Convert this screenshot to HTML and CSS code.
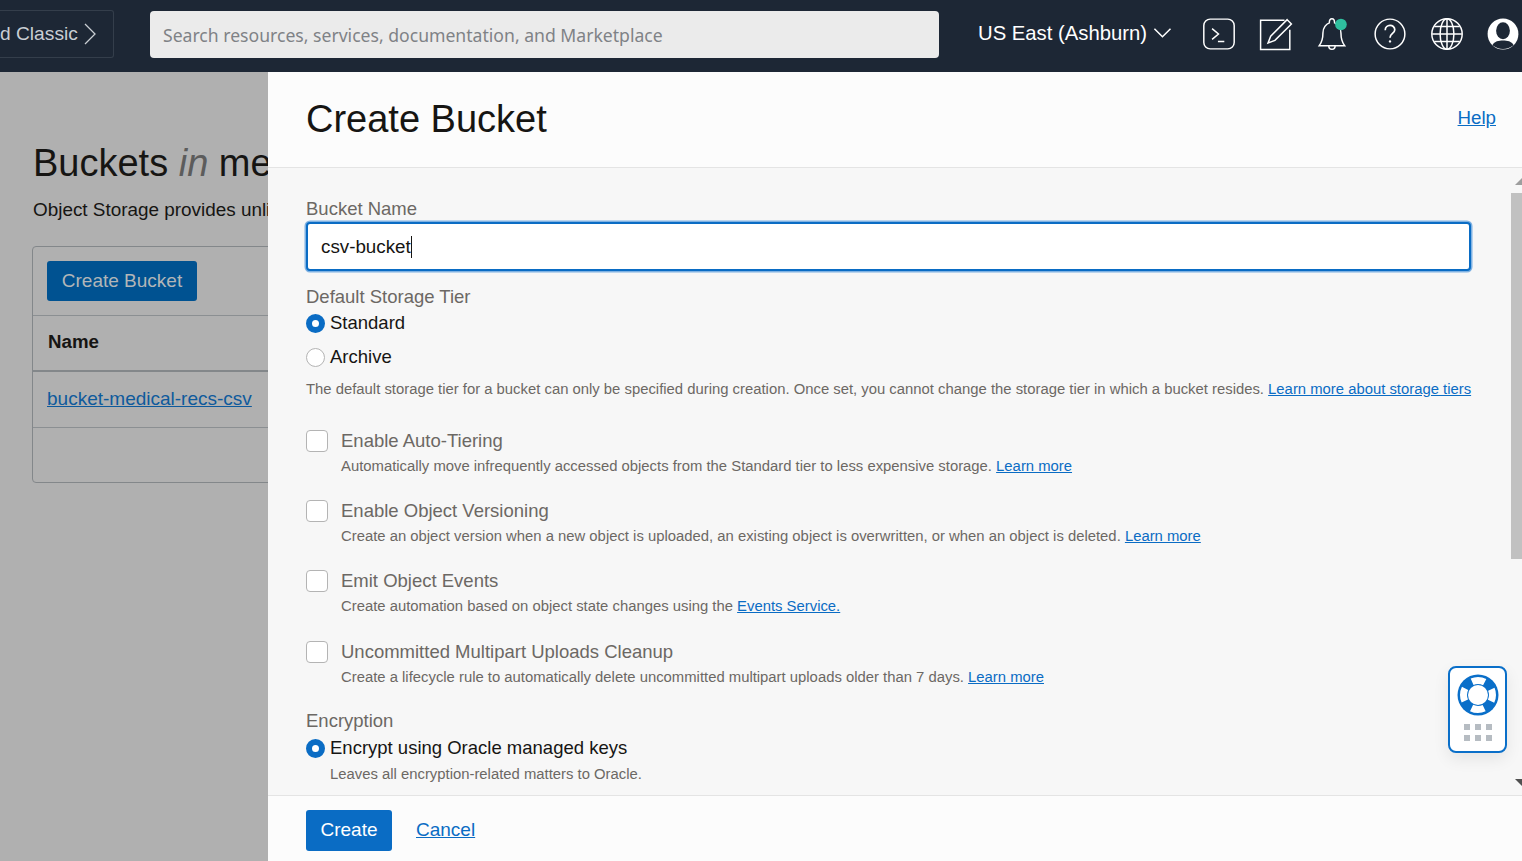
FILE: index.html
```html
<!DOCTYPE html>
<html lang="en">
<head>
    <meta charset="UTF-8">
    <meta name="viewport" content="width=device-width, initial-scale=1.0">
    <title>Create Bucket</title>
    <link rel="stylesheet" href="styles.css">
</head>
<body>
    <header class="topbar">
        <div class="classic">
            <span>d Classic</span>
            <svg width="12" height="22" viewBox="0 0 12 22" fill="none" stroke="#c9ced3" stroke-width="1.3"><path d="M1 1l10 10L1 21"/></svg>
        </div>
        <div class="search">Search resources, services, documentation, and Marketplace</div>
        <div class="region">
            <span>US East (Ashburn)</span>
            <svg width="20" height="12" viewBox="0 0 20 12" fill="none" stroke="#fff" stroke-width="1.6"><path d="M1.5 1.5l8.5 8.5 8.5-8.5"/></svg>
        </div>
        <div class="tools">
            <svg class="tool" width="34" height="34" viewBox="0 0 32 32" fill="none" stroke="#fff" stroke-width="1.4"><rect x="1.700" y="2" width="28.600" height="28" rx="6"/><path d="M9.500 11l6 5-6 5M15 23h6"/></svg>
            <svg class="tool" width="34" height="34" viewBox="0 0 32 32" fill="none" stroke="#fff" stroke-width="1.4"><path d="M24 3H1.500v27.500h27.500V12"/><path d="M26.500 2.500l4 4L15 22l-6.500 2.500L11 18z"/></svg>
            <svg class="tool" width="34" height="36" viewBox="0 0 32 34" fill="none" stroke="#fff" stroke-width="1.4"><path d="M3 28c3-4 3.500-7 3.500-12 0-5 3-8.500 6-9.500 0-3 1-4 2.500-4s2.500 1 2.500 4c3 1 6 4.500 6 9.500 0 5 .5 8 3.500 12z"/><path d="M12 28c0 4.500 6 4.500 6 0"/><circle cx="23.500" cy="8" r="5.500" fill="#2fbf9f" stroke="none"/></svg>
            <svg class="tool" width="34" height="34" viewBox="0 0 32 32" fill="none" stroke="#fff" stroke-width="1.4"><circle cx="16" cy="16" r="14"/><path d="M11.500 12.500c0-6 9-6 9-.5 0 3.500-4.500 3.500-4.500 7.500" stroke-width="1.6"/><circle cx="16" cy="23" r="1.100" fill="#fff" stroke="none"/></svg>
            <svg class="tool" width="34" height="34" viewBox="0 0 32 32" fill="none" stroke="#fff" stroke-width="1.4"><circle cx="16" cy="16" r="14.300"/><ellipse cx="16" cy="16" rx="6.500" ry="14.300"/><path d="M16 1.700v28.600M2 16h28M4 9h24M4 23h24"/></svg>
            <svg class="tool" width="32" height="34" viewBox="0 0 30 32"><circle cx="15" cy="16" r="14.500" fill="#fff"/><ellipse cx="15" cy="13" rx="6.500" ry="8" fill="#1d2735"/><path d="M5 26.500c2-4 6-4.500 10-4.500s8 .5 10 4.500c-3 2.300-6.500 3.500-10 3.500s-7-1.200-10-3.500z" fill="#1d2735"/></svg>
        </div>
    </header>

    <main class="page">
        <h1 class="page-title">Buckets <em>in</em> medical-recs</h1>
        <p class="page-desc">Object Storage provides unlimited, high-performance storage</p>
        <div class="panel">
            <div class="panel-top"><span class="btn-dim">Create Bucket</span></div>
            <div class="panel-head">Name</div>
            <div class="panel-row"><a href="#">bucket-medical-recs-csv</a></div>
        </div>
    </main>

    <div class="drawer">
        <div class="drawer-head">
            <h2>Create Bucket</h2>
            <a href="#" class="help">Help</a>
        </div>

        <div class="drawer-body">
            <form class="form">
                <div class="label">Bucket Name</div>
                <div class="name-input"><span>csv-bucket</span><i class="caret"></i></div>

                <div class="label label-tier">Default Storage Tier</div>
                <div class="radio-row"><span class="radio on"></span>Standard</div>
                <div class="radio-row second"><span class="radio"></span>Archive</div>
                <p class="hint tier-hint">The default storage tier for a bucket can only be specified during creation. Once set, you cannot change the storage tier in which a bucket resides. <a href="#">Learn more about storage tiers</a></p>

                <div class="check">
                    <span class="box"></span>
                    <div>
                        <div class="check-title">Enable Auto-Tiering</div>
                        <p class="hint">Automatically move infrequently accessed objects from the Standard tier to less expensive storage. <a href="#">Learn more</a></p>
                    </div>
                </div>
                <div class="check">
                    <span class="box"></span>
                    <div>
                        <div class="check-title">Enable Object Versioning</div>
                        <p class="hint">Create an object version when a new object is uploaded, an existing object is overwritten, or when an object is deleted. <a href="#">Learn more</a></p>
                    </div>
                </div>
                <div class="check">
                    <span class="box"></span>
                    <div>
                        <div class="check-title">Emit Object Events</div>
                        <p class="hint">Create automation based on object state changes using the <a href="#">Events Service.</a></p>
                    </div>
                </div>
                <div class="check check-last">
                    <span class="box"></span>
                    <div>
                        <div class="check-title">Uncommitted Multipart Uploads Cleanup</div>
                        <p class="hint">Create a lifecycle rule to automatically delete uncommitted multipart uploads older than 7 days. <a href="#">Learn more</a></p>
                    </div>
                </div>

                <div class="label label-enc">Encryption</div>
                <div class="radio-row"><span class="radio on"></span>Encrypt using Oracle managed keys</div>
                <p class="hint enc-hint">Leaves all encryption-related matters to Oracle.</p>
            </form>

            <div class="scrollbar">
                <span class="arrow up"></span>
                <span class="thumb"></span>
                <span class="arrow down"></span>
            </div>
        </div>

        <div class="drawer-foot">
            <button type="button" class="create">Create</button>
            <a href="#" class="cancel">Cancel</a>
        </div>

        <div class="help-widget">
            <svg width="42" height="42" viewBox="0 0 42 42">
                <circle cx="21" cy="21" r="20.500" fill="#0a6fc9"/>
                <circle cx="21" cy="21" r="14.500" fill="none" stroke="#fff" stroke-width="7" stroke-dasharray="13 9.780" stroke-dashoffset="6.500"/>
                <circle cx="21" cy="21" r="10" fill="#fff"/>
            </svg>
            <div class="dots"><i></i><i></i><i></i><i></i><i></i><i></i></div>
        </div>
    </div>
</body>
</html>
```
FILE: styles.css
```css
* {
    box-sizing: border-box;
}
html, body {
    height: 100%;
}
body {
    margin: 0;
    position: relative;
    overflow: hidden;
    background-color: #b0b0b0;
    font-family: "Liberation Sans", Arial, sans-serif;
    color: #161513;
}
a {
    color: #0a6cc4;
}

/* top bar */
.topbar {
    height: 72px;
    background-color: #1d2735;
    display: flex;
    align-items: center;
}
.classic {
    width: 114px;
    height: 48px;
    margin-top: -4px;
    border: 1px solid #343e4b;
    border-left: none;
    border-radius: 0 3px 3px 0;
    display: flex;
    align-items: center;
    gap: 6px;
    color: #c9ced3;
    font-size: 19.2px;
}
.search {
    width: 789px;
    height: 47px;
    margin-left: 36px;
    margin-top: -3px;
    padding-left: 13px;
    border-radius: 4px;
    background-color: #ebebeb;
    color: #7f8286;
    font-family: "Noto Sans", sans-serif;
    font-size: 17.6px;
    line-height: 49px;
    white-space: nowrap;
}
.region {
    width: 194px;
    margin-left: 39px;
    margin-top: -6px;
    display: flex;
    align-items: center;
    gap: 6px;
    color: #fff;
    font-size: 20.3px;
    white-space: nowrap;
}
.tools {
    margin-left: 30px;
    margin-top: -4px;
    display: flex;
    align-items: center;
    gap: 23px;
    flex: none;
}
.tool {
    flex: none;
}

/* dimmed page behind the drawer, cut off where the drawer starts */
.page {
    width: 268px;
    height: 789px;
    overflow: hidden;
    padding: 68px 0 0 33px;
    white-space: nowrap;
}
.page-title {
    margin: 0;
    font-size: 38px;
    font-weight: normal;
    line-height: 46px;
}
.page-title em {
    color: #5c5c5c;
}
.page-desc {
    margin: 12px 0 0;
    font-size: 18.9px;
    line-height: 24px;
}
.panel {
    width: 500px;
    height: 237px;
    margin: 24px 0 0 -1px;
    border: 1px solid #83878a;
    border-radius: 4px;
}
.panel-top {
    height: 69px;
    padding: 14px 14px 0;
    border-bottom: 1px solid #8b8f92;
}
.btn-dim {
    display: inline-block;
    width: 150px;
    height: 40px;
    border-radius: 3px;
    background-color: #005291;
    color: #b2b6b8;
    font-size: 19px;
    line-height: 40px;
    text-align: center;
}
.panel-head {
    height: 56px;
    padding-left: 15px;
    border-bottom: 2px solid #83878a;
    font-size: 18.7px;
    font-weight: bold;
    line-height: 52px;
}
.panel-row {
    height: 56px;
    padding-left: 14px;
    border-bottom: 1px solid #8b8f92;
    font-size: 19px;
    line-height: 54px;
}
.panel-row a {
    color: #0e5a9c;
}

/* drawer */
.drawer {
    position: absolute;
    left: 268px;
    top: 72px;
    right: 0;
    bottom: 0;
    background-color: #f7f7f7;
    display: flex;
    flex-direction: column;
}
.drawer-head {
    height: 96px;
    flex: none;
    padding: 0 26px 0 38px;
    background-color: #fcfcfc;
    border-bottom: 1px solid #e4e4e4;
    display: flex;
    align-items: center;
    justify-content: space-between;
}
.drawer-head h2 {
    margin: 0;
    font-size: 38px;
    font-weight: normal;
}
.help {
    font-size: 18.7px;
    margin-bottom: 3px;
}
.drawer-body {
    flex: 1;
    min-height: 0;
    position: relative;
    overflow: hidden;
}
.form {
    width: 1203px;
    padding: 29px 0 0 38px;
}
.label {
    color: #6c6864;
    font-size: 18.5px;
    line-height: 24px;
}
.name-input {
    height: 49px;
    margin-top: 1px;
    padding-left: 13px;
    background-color: #fff;
    border: 2px solid #0a6cc4;
    border-radius: 4px;
    box-shadow: 0 0 0 1.5px #7fb2e3;
    font-size: 18.8px;
    line-height: 45px;
    display: flex;
    align-items: center;
}
.caret {
    width: 1px;
    height: 22px;
    background-color: #161513;
}
.label-tier {
    margin-top: 14px;
    margin-bottom: 2px;
}
.radio-row {
    display: flex;
    align-items: center;
    gap: 5px;
    height: 24px;
    font-size: 18.5px;
}
.radio-row.second {
    margin-top: 10px;
}
.radio {
    width: 19px;
    height: 19px;
    border: 1px solid #b4b4b4;
    border-radius: 50%;
    background-color: #fff;
}
.radio.on {
    border: 6px solid #0a6cc4;
}
.hint {
    margin: 0;
    color: #6c6864;
    font-size: 14.85px;
    line-height: 20px;
    white-space: nowrap;
}
.tier-hint {
    margin: 10px 0 30px;
}
.check {
    display: flex;
    gap: 13px;
    height: 70px;
}
.check-last {
    margin-top: 1px;
    height: 69px;
}
.box {
    flex: none;
    width: 22px;
    height: 22px;
    margin-top: 1px;
    border: 1px solid #b4b4b4;
    border-radius: 4px;
    background-color: #fff;
}
.check-title {
    color: #6c6864;
    font-size: 18.5px;
    line-height: 24px;
    margin-bottom: 3px;
}
.label-enc {
    margin-bottom: 3px;
}
.enc-hint {
    margin: 4px 0 0 24px;
}
.scrollbar {
    position: absolute;
    top: 0;
    right: 0;
    bottom: 0;
    width: 11px;
}
.thumb {
    position: absolute;
    top: 25px;
    left: 0;
    right: 0;
    height: 366px;
    background-color: #c1c1c1;
}
.arrow {
    position: absolute;
    right: 0;
    width: 0;
    height: 0;
    border-left: 7px solid transparent;
}
.arrow.up {
    top: 10px;
    border-bottom: 7px solid #9e9e9e;
}
.arrow.down {
    bottom: 9px;
    border-top: 7px solid #505050;
}
.drawer-foot {
    height: 66px;
    flex: none;
    padding: 3px 0 0 38px;
    background-color: #fcfcfc;
    border-top: 1px solid #e4e4e4;
    display: flex;
    align-items: center;
    gap: 24px;
}
.create {
    width: 86px;
    height: 41px;
    border: none;
    border-radius: 3px;
    background-color: #0a6cc4;
    color: #fff;
    font-family: inherit;
    font-size: 19px;
    padding: 0;
}
.cancel {
    font-size: 19px;
}
.help-widget {
    position: absolute;
    left: 1180px;
    top: 594px;
    width: 59px;
    height: 87px;
    background-color: #fff;
    border: 2px solid #0a6fc9;
    border-radius: 8px;
    box-shadow: 0 6px 16px rgba(0, 0, 0, 0.08);
    display: flex;
    flex-direction: column;
    align-items: center;
    padding-top: 6px;
}
.dots {
    display: grid;
    grid-template-columns: repeat(3, 6px);
    gap: 5px 5px;
    margin-top: 8px;
}
.dots i {
    width: 6px;
    height: 6px;
    background-color: #b6bcc2;
}
```
